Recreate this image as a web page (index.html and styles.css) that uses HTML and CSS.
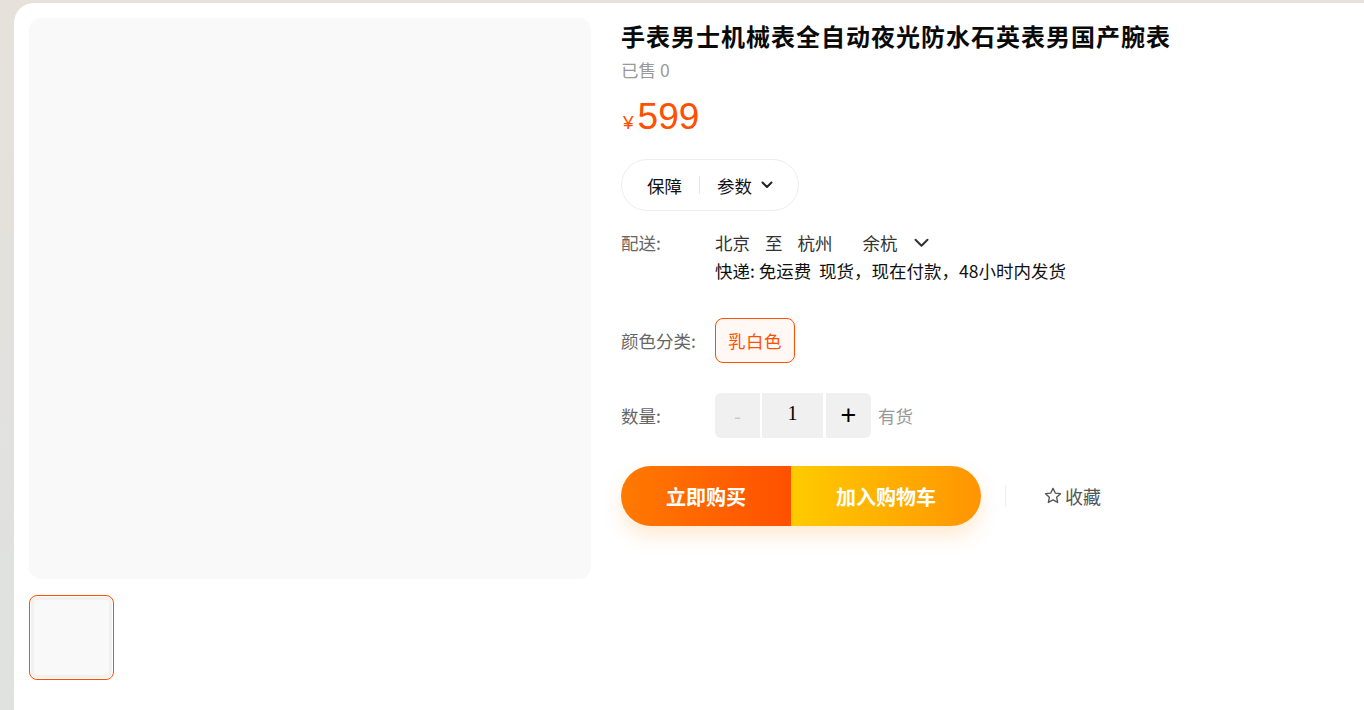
FILE: index.html
```html
<!DOCTYPE html>
<html lang="zh-CN">
<head>
<meta charset="utf-8">
<title>商品详情</title>
<link rel="stylesheet" href="styles.css">
</head>
<body>
<div class="page">
  <div class="card">
    <div class="gallery">
      <div class="main-pic"></div>
      <div class="thumbs">
        <div class="thumb active"><div class="thumb-inner"></div></div>
      </div>
    </div>
    <div class="info">
      <h1 class="title">手表男士机械表全自动夜光防水石英表男国产腕表</h1>
      <div class="sold">已售 0</div>
      <div class="price"><span class="cur">¥</span><span class="num">599</span></div>
      <div class="pill">
        <span class="pill-item">保障</span>
        <span class="pill-sep"></span>
        <span class="pill-item">参数
          <svg class="chev" width="12" height="8" viewBox="0 0 12 8"><path d="M1.5 1.5 L6 6 L10.5 1.5" fill="none" stroke="#222" stroke-width="2" stroke-linecap="round" stroke-linejoin="round"/></svg>
        </span>
      </div>
      <div class="row ship">
        <div class="label">配送:</div>
        <div class="value">
          <div class="ship-line">
            <span class="s1">北京</span><span class="s1">至</span><span class="s2">杭州</span><span class="s3">余杭</span>
            <svg class="chev2" width="15" height="10" viewBox="0 0 15 10"><path d="M1.5 1.8 L7.5 7.8 L13.5 1.8" fill="none" stroke="#333" stroke-width="2" stroke-linecap="round" stroke-linejoin="round"/></svg>
          </div>
          <div class="ship-line dark">快递: 免运费&nbsp;&nbsp;现货，现在付款，48小时内发货</div>
        </div>
      </div>
      <div class="row sku">
        <div class="label">颜色分类:</div>
        <div class="value"><span class="chip">乳白色</span></div>
      </div>
      <div class="row qty">
        <div class="label">数量:</div>
        <div class="value stepper">
          <span class="step minus">-</span>
          <span class="step input">1</span>
          <span class="step plus">+</span>
          <span class="stock">有货</span>
        </div>
      </div>
      <div class="actions">
        <div class="btns">
          <span class="btn buy">立即购买</span>
          <span class="btn cart">加入购物车</span>
        </div>
        <span class="act-sep"></span>
        <span class="fav">
          <svg width="18" height="18" viewBox="0 0 24 24"><path d="M12 1.8 L15 8.1 L22 8.9 L16.8 13.6 L18.2 20.6 L12 17.1 L5.8 20.6 L7.2 13.6 L2 8.9 L9 8.1 Z" fill="none" stroke="#555" stroke-width="1.8" stroke-linejoin="round"/></svg>
          收藏
        </span>
      </div>
    </div>
  </div>
</div>
</body>
</html>
```

FILE: styles.css
```css
* { box-sizing: border-box; }
html, body { margin: 0; padding: 0; height: 100%; }
body {
  background: linear-gradient(180deg, #e6e1db 0%, #e2e1dd 50%, #dfe2de 100%);
  font-family: "Noto Sans CJK SC", "Noto Sans", sans-serif;
  color: #333;
  overflow: hidden;
}
.page {
  padding: 3px 0 0 14px;
  height: 100%;
}
.card {
  background: #fff;
  border-top-left-radius: 20px;
  height: 100%;
  padding: 15px 15px;
  display: flex;
  gap: 30px;
  align-items: flex-start;
}
.gallery { width: 562px; flex: none; }
.main-pic {
  width: 562px;
  height: 561px;
  background: #f9f9f9;
  border-radius: 12px;
}
.thumbs { margin-top: 16px; display: flex; gap: 10px; }
.thumb {
  width: 85px;
  height: 85px;
  border-radius: 8px;
  border: 1px solid #ff5000;
  padding: 1px;
}
.thumb-inner {
  width: 100%;
  height: 100%;
  border-radius: 6px;
  background: #f9f9f9;
  box-shadow: inset 0 0 0 3px #f2f1ee;
}
.info { flex: 1; min-width: 0; }
.title {
  margin: 0;
  font-size: 24px;
  line-height: 36px;
  font-weight: 700;
  color: #0a0a0a;
  letter-spacing: 1px;
}
.sold {
  margin-top: 4px;
  font-size: 17.5px;
  line-height: 24px;
  color: #999;
}
.price {
  margin-top: 15px;
  height: 40px;
  line-height: 40px;
  color: #ff5000;
  display: flex;
  align-items: baseline;
}
.price .cur { font-size: 19px; margin: 0 4px 0 2px; font-family: "Liberation Sans", sans-serif; }
.price .num { font-size: 37px; font-family: "Liberation Sans", "Noto Sans", sans-serif; }
.pill {
  margin-top: 22px;
  display: inline-flex;
  align-items: center;
  height: 52px;
  padding: 0 25px;
  border: 1px solid #eee;
  border-radius: 26px;
  font-size: 17.5px;
  color: #111;
}
.pill-item { display: inline-flex; align-items: center; }
.pill-sep {
  width: 1px;
  height: 18px;
  background: #e8e8e8;
  margin: 0 17px;
}
.chev { margin-left: 9px; }
.row { display: flex; font-size: 17.5px; }
.label { width: 94px; flex: none; color: #666; }
.ship { margin-top: 18px; }
.ship .label, .ship-line { line-height: 28px; }
.ship-line { display: flex; align-items: center; color: #333; }
.ship-line.dark { color: #111; }
.s1 { margin-right: 15px; }
.s2 { margin-right: 30px; }
.s3 { margin-right: 16px; }
.sku { margin-top: 33px; align-items: center; }
.chip {
  display: inline-flex;
  align-items: center;
  height: 45px;
  padding: 0 12px;
  border: 1px solid #ff5000;
  border-radius: 8px;
  background: #fff8f5;
  color: #ff5000;
  letter-spacing: 0.5px;
}
.qty { margin-top: 30px; align-items: center; }
.stepper { display: flex; align-items: center; }
.step {
  height: 45px;
  background: #f0f0f0;
  display: inline-flex;
  align-items: center;
  justify-content: center;
}
.minus {
  width: 45px;
  border-radius: 6px 0 0 6px;
  color: #c8c8c8;
  font-size: 20px;
  margin-right: 2px;
}
.input {
  width: 61px;
  font-family: "Liberation Serif", serif;
  font-size: 20px;
  color: #000;
  margin-right: 3px;
  padding-bottom: 4px;
}
.plus {
  width: 45px;
  border-radius: 0 6px 6px 0;
  font-size: 27px;
  color: #000;
  font-family: "Liberation Sans", sans-serif;
}
.stock { margin-left: 7px; color: #999; }
.actions {
  margin-top: 28px;
  display: flex;
  align-items: center;
}
.btns {
  display: flex;
  border-radius: 30px;
  box-shadow: 0 10px 20px rgba(255, 140, 0, 0.18);
}
.btn {
  height: 60px;
  display: inline-flex;
  align-items: center;
  justify-content: center;
  color: #fff;
  font-size: 20px;
  font-weight: 700;
}
.buy {
  width: 170px;
  border-radius: 30px 0 0 30px;
  background: linear-gradient(90deg, #ff7a00, #ff5000);
}
.cart {
  width: 190px;
  border-radius: 0 30px 30px 0;
  background: linear-gradient(90deg, #ffcb00, #ff9402);
}
.act-sep {
  width: 1px;
  height: 22px;
  background: #eee;
  margin: 0 38px 0 24px;
}
.fav {
  display: inline-flex;
  align-items: center;
  gap: 3px;
  font-size: 18px;
  color: #555;
}
```
